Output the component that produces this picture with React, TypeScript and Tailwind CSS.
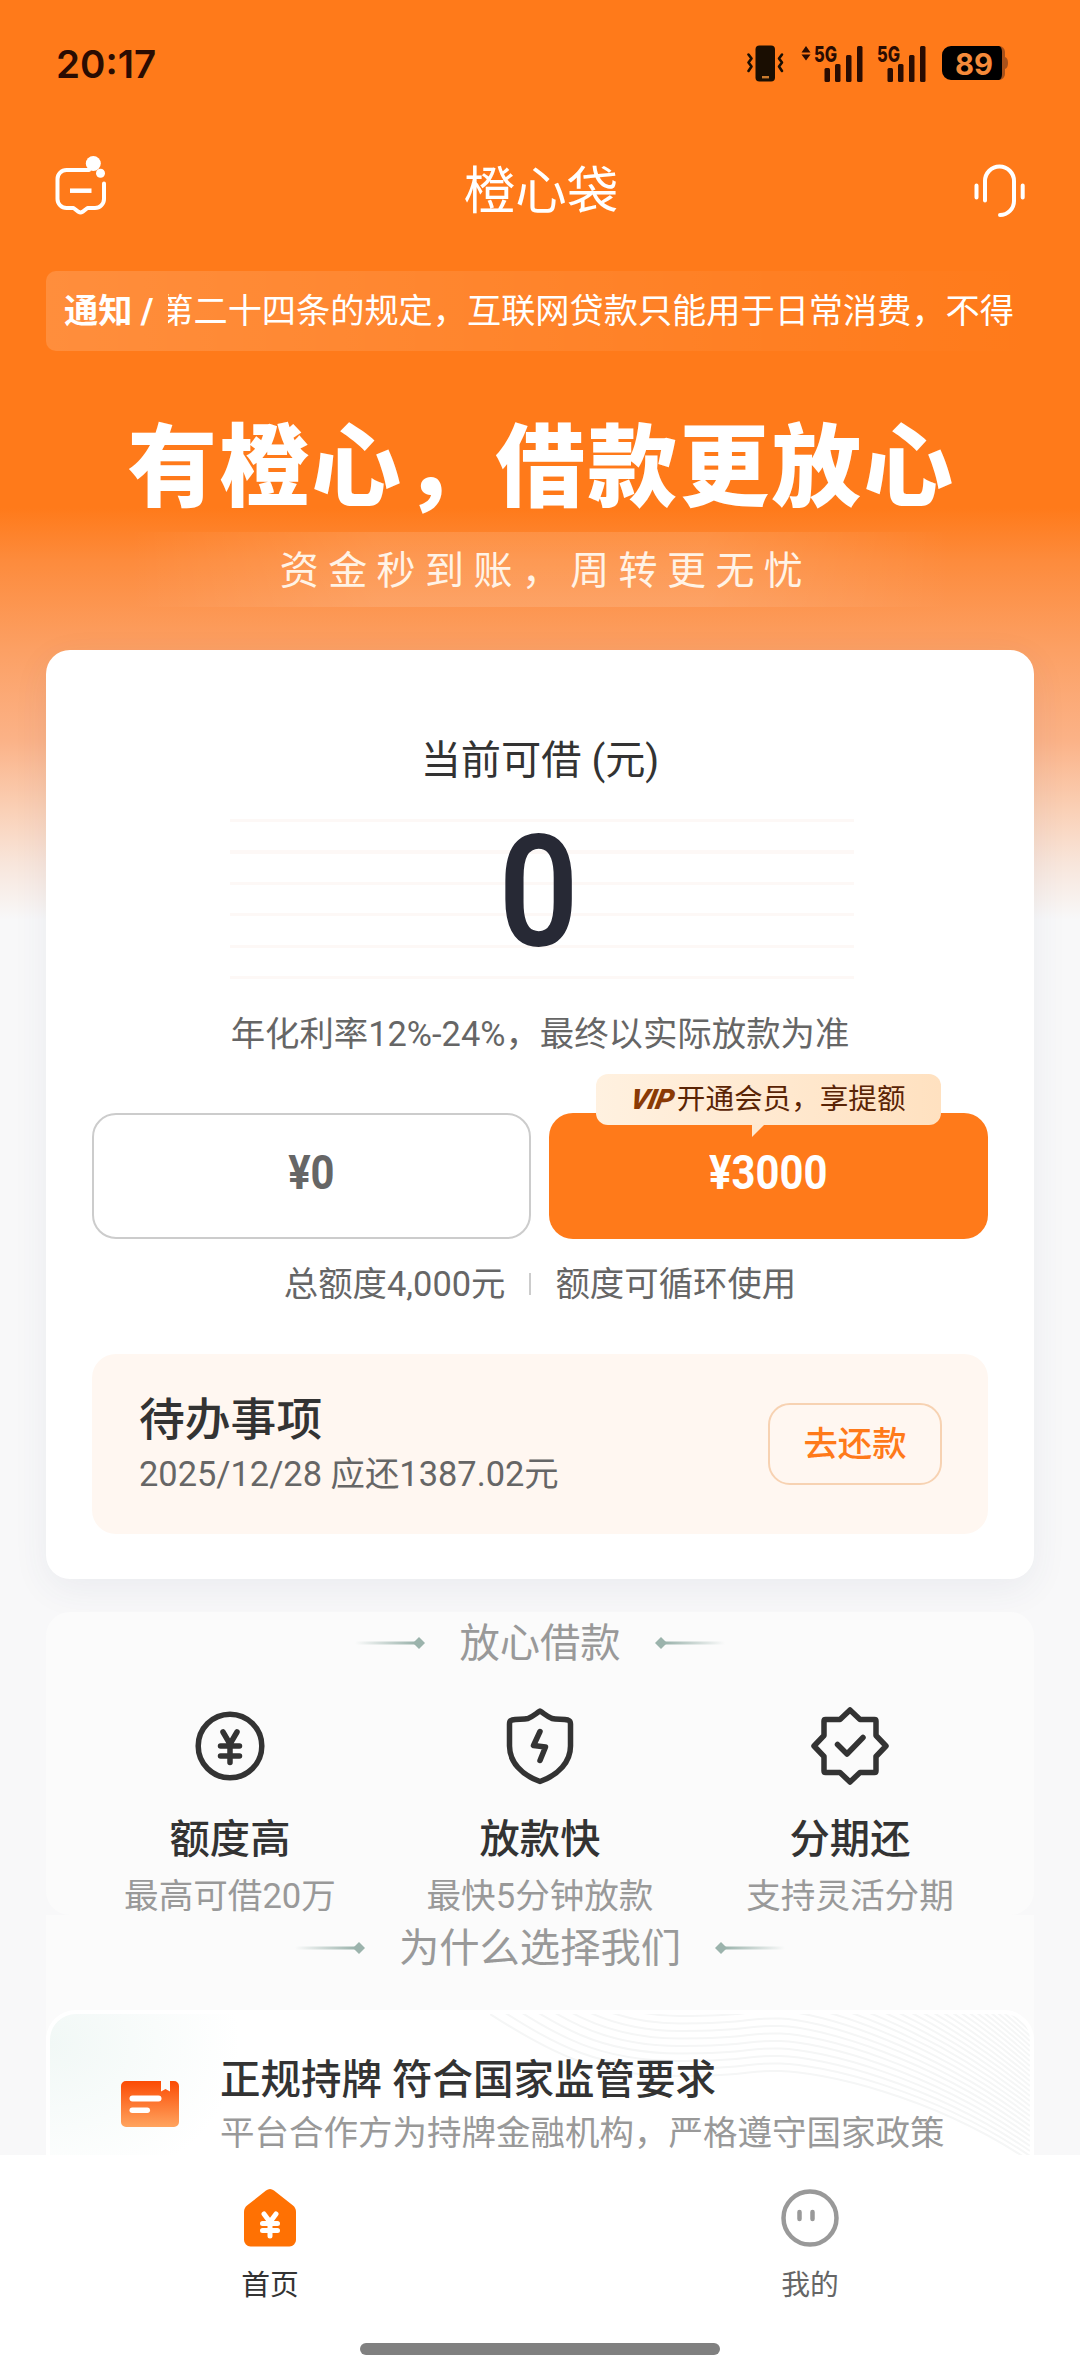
import React from 'react';

interface Feature {
  title: string;
  desc: string;
  icon: React.ReactNode;
}

const INK = '#333333';

const VibrateIcon = () => (
  <svg width="37" height="37" viewBox="0 0 37 37" fill="none">
    <rect x="8.5" y="0.5" width="19.5" height="36" rx="4" fill="#1a0e02" />
    <rect x="15" y="31" width="7" height="2.4" fill="#c87a2e" />
    <path d="M1.5 9.5l3 4-3 4 3 4-3 4.5" stroke="#1a0e02" strokeWidth="2.6" strokeLinecap="round" strokeLinejoin="round" />
    <path d="M35 9.5l-3 4 3 4-3 4 3 4.5" stroke="#1a0e02" strokeWidth="2.6" strokeLinecap="round" strokeLinejoin="round" />
  </svg>
);

const SignalIcon = ({ arrows = false }: { arrows?: boolean }) => (
  <svg width="62" height="50" viewBox="0 -6 62 50" fill="#2a0c02">
    {arrows && <path d="M0.5 7.5L5 1l4.5 6.5zM0.5 9.5L5 15.5l4.5-6z" />}
    <text x="13" y="16.5" fontFamily="Inter, sans-serif" fontWeight="800" fontSize="22" textLength="23" lengthAdjust="spacingAndGlyphs">5G</text>
    <rect x="23.5" y="23" width="5.5" height="14" rx="1.5" />
    <rect x="34" y="19" width="5.5" height="18" rx="1.5" />
    <rect x="45" y="10" width="5.5" height="27" rx="1.5" />
    <rect x="56" y="1" width="5.5" height="36" rx="1.5" />
  </svg>
);

const BatteryIcon = () => (
  <svg width="66" height="35" viewBox="0 0 66 35">
    <path d="M56 0h1a6 6 0 0 1 6 6v5q3 1 3 6t-3 6v5a6 6 0 0 1-6 6h-1z" fill="#a8511a" />
    <path d="M9 0h48q3 1 3 6v22q0 5-3 6H9a9 9 0 0 1-9-9V9a9 9 0 0 1 9-9z" fill="#000" />
    <text x="13" y="28.5" fontFamily="Inter, sans-serif" fontWeight="700" fontSize="30" textLength="38" lengthAdjust="spacingAndGlyphs" fill="#f58a3a">89</text>
  </svg>
);

const MessageIcon = () => (
  <svg width="56" height="62" viewBox="0 0 56 62" fill="none" stroke="#fff" strokeWidth="4" strokeLinecap="round" strokeLinejoin="round">
    <path d="M37 14H14.5a9 9 0 0 0-9 9v20a9 9 0 0 0 9 9h7l5 3.8q2 1.2 4 0l5-3.8H43a9 9 0 0 0 9-9V27.5" />
    <path d="M18 34.7h21.5" strokeWidth="4.5" strokeLinecap="butt" />
    <circle cx="41.3" cy="7.5" r="7.5" fill="#fff" stroke="none" />
    <circle cx="48.5" cy="17.3" r="4.5" fill="#fff" stroke="none" />
  </svg>
);

const HeadsetIcon = () => (
  <svg width="52" height="54" viewBox="0 0 52 54" fill="none" stroke="#fff" strokeWidth="4" strokeLinecap="round">
    <path d="M11 36.5V17a14.5 14.5 0 0 1 29 0V37a14 14 0 0 1-14 14" />
    <path d="M2.5 21.5v12M48.7 21.5v12" />
  </svg>
);

const YenCircleIcon = () => (
  <svg width="80" height="80" viewBox="0 0 80 80" fill="none" stroke={INK} strokeWidth="5.5" strokeLinecap="round" strokeLinejoin="round">
    <circle cx="40" cy="40" r="31.8" />
    <path d="M33 26l7 12 7-12M40 38v18.5M30.5 40h19M30.5 50h19" />
  </svg>
);

const ShieldBoltIcon = () => (
  <svg width="80" height="80" viewBox="0 0 80 80" fill="none" stroke={INK} strokeWidth="5.5" strokeLinecap="round" strokeLinejoin="round">
    <path d="M40 5C36 7.5 33 10.5 28 12.5C23 13.5 17 13 12 14q-2.5 .8-2.5 4V40c0 16 12 29 30.5 35.5C58.5 69 70.5 56 70.5 40V18q0-3.2-2.5-4C63 13 57 13.5 52 12.5C47 10.5 44 7.5 40 5z" />
    <path d="M40 25.5L33.5 39.5l12 1.5L40 54.5" />
  </svg>
);

const BadgeCheckIcon = () => (
  <svg width="80" height="80" viewBox="0 0 80 80" fill="none" stroke={INK} strokeWidth="5.5" strokeLinecap="round" strokeLinejoin="round">
    <path d="M40 4L50 13.5H64.5q1.5 0 1.5 1.5V29.5L76 40 66 50.5V65q0 1.5-1.5 1.5H50L40 76 30 66.5H15.5q-1.500 0-1.500-1.500V50.5L4 40 14 29.5V15q0-1.5 1.5-1.5H30z" />
    <path d="M27.5 38.5l9.5 9.5 16-16.5" />
  </svg>
);

const LicenseIcon = () => (
  <svg width="58" height="47" viewBox="0 0 58 47">
    <defs>
      <linearGradient id="license" x1="0" y1="0" x2="0" y2="1">
        <stop offset="0" stopColor="#fb4b04" />
        <stop offset="1" stopColor="#ffa45f" />
      </linearGradient>
    </defs>
    <path d="M5 0h35v10.5l4.5-2.5L49 10.5V0h4a5 5 0 0 1 5 5v36a5 5 0 0 1-5 5H5a5 5 0 0 1-5-5V5a5 5 0 0 1 5-5z" fill="url(#license)" />
    <rect x="8.5" y="14.5" width="32" height="6" rx="3" fill="#fff" />
    <rect x="8.5" y="26.5" width="20.5" height="5.5" rx="2.75" fill="#fff" />
  </svg>
);

const HomeIcon = () => (
  <svg width="54" height="60" viewBox="0 0 54 60" fill="none">
    <path d="M23 2.5q4-3 8 0L50 17.5q3 2.5 3 6.5v28a6.5 6.5 0 0 1-6.5 6.5h-39A6.5 6.5 0 0 1 1 52V24q0-4 3-6.5z" fill="#ff7103" />
    <path d="M21 26l6 8 6-8M27 34v14M19.5 35.5h15M19.5 42.5h15" stroke="#fff" strokeWidth="5" strokeLinecap="round" />
  </svg>
);

const FaceIcon = () => (
  <svg width="60" height="60" viewBox="0 0 60 60" fill="none" stroke="#999" strokeWidth="4.5" strokeLinecap="round">
    <circle cx="30" cy="30" r="26.5" />
    <path d="M19.5 24v7M32.5 24v7" />
  </svg>
);

const TitleMark = ({ flip = false }: { flip?: boolean }) => (
  <svg width="70" height="14" viewBox="0 0 70 14" className={flip ? '-scale-x-100' : ''}>
    <defs>
      <linearGradient id="mark" x1="0" y1="0" x2="1" y2="0">
        <stop offset="0" stopColor="#9bb3ac" stopOpacity="0" />
        <stop offset="1" stopColor="#9bb3ac" />
      </linearGradient>
    </defs>
    <rect x="0" y="5.5" width="60" height="3" fill="url(#mark)" />
    <path d="M64 1l6 6-6 6-6-6z" fill="#9bb3ac" />
  </svg>
);

const SectionTitle = ({ text }: { text: string }) => (
  <div className="flex h-[58px] items-center justify-center gap-[34px]">
    <TitleMark />
    <span className="pt-px text-[40.3px] leading-[58px] text-[#999]">{text}</span>
    <TitleMark flip />
  </div>
);

const features: Feature[] = [
  { title: '额度高', desc: '最高可借20万', icon: <YenCircleIcon /> },
  { title: '放款快', desc: '最快5分钟放款', icon: <ShieldBoltIcon /> },
  { title: '分期还', desc: '支持灵活分期', icon: <BadgeCheckIcon /> },
];

// Contour lines in the corner of the license card
const waves = Array.from({ length: 28 }, (_, k) => {
  const mid = 7.5 * k;
  return `M0 ${-11 * k}C70 ${45 - 10 * k} 110 ${62 - mid} 190 ${62 - mid}S250 ${56 - mid} 290 ${57 - mid}S440 ${80 - 6 * k} 540 ${147 - 5 * k}`;
});

const App: React.FC = () => {
  return (
    <div className="flex h-[2376px] w-[1080px] flex-col overflow-hidden bg-[#f8f8f9] bg-[linear-gradient(180deg,#ff7a1a_0px,#ff7a1a_508px,#fd8b3c_560px,#fca064_650px,#fbb287_740px,#fad0b6_810px,#f8e6dc_865px,#f8f8f9_920px)] font-[Roboto,'Noto_Sans_CJK_SC',sans-serif] text-[#333]">
      {/* Status bar */}
      <div className="flex h-[126px] shrink-0 items-center justify-between pl-[56px] pr-[72px] pt-px">
        <span className="font-[Inter,sans-serif] text-[38.5px] font-semibold leading-[40px] text-[#2a0c02]">20:17</span>
        <div className="flex items-center">
          <VibrateIcon />
          <div className="ml-[17px]"><SignalIcon arrows /></div>
          <div className="ml-px"><SignalIcon /></div>
          <div className="ml-[16px]"><BatteryIcon /></div>
        </div>
      </div>

      {/* Nav bar */}
      <div className="flex h-[126px] shrink-0 items-center justify-between pl-[52px] pr-[54px]">
        <div className="-mt-1"><MessageIcon /></div>
        <h1 className="pt-[5px] text-[51.5px] leading-[72px] text-white">橙心袋</h1>
        <div className="mt-[3px]"><HeadsetIcon /></div>
      </div>

      {/* Notice */}
      <div className="mx-[46px] mt-[19px] flex h-[80px] shrink-0 items-center rounded-[10px] bg-linear-to-r from-white/15 to-white/0 pl-[18px] pr-[20px] pt-[2px] text-[34.2px] text-white">
        <span className="w-[104px] shrink-0 whitespace-pre font-bold">通知 /</span>
        <div className="flex w-[846px] justify-end overflow-hidden whitespace-nowrap">
          <span className="shrink-0">第二十四条的规定，互联网贷款只能用于日常消费，不得</span>
        </div>
      </div>

      {/* Slogan */}
      <h2 className="mt-[55px] h-[124px] shrink-0 whitespace-nowrap pl-[3px] text-center text-[89.5px] font-black leading-[126px] tracking-[2.5px] text-white">有橙心，借款更放心</h2>
      <div className="mx-[130px] mt-[2px] flex h-[75px] shrink-0 items-center justify-center bg-[linear-gradient(90deg,transparent,rgba(255,255,255,0.12)_30%,rgba(255,255,255,0.12)_70%,transparent)]">
        <span className="pl-[12px] pt-[2px] text-[39px] leading-[60px] tracking-[9.4px] text-[#fff3e6]">资金秒到账，周转更无忧</span>
      </div>

      {/* Credit card */}
      <div className="mx-[46px] mt-[43px] flex h-[929px] shrink-0 flex-col rounded-[24px] bg-white px-[46px] shadow-[0_10px_36px_rgba(60,70,110,0.07)]">
        <div className="mt-[81px] h-[60px] text-center text-[40.2px] leading-[60px]">当前可借 (元)</div>
        <div className="ml-[138px] mt-[28px] flex h-[160px] w-[624px] items-center justify-center bg-[repeating-linear-gradient(180deg,#fdf8f6_0px,#fdf8f6_3px,#fff_3px,#fff_31.5px)]">
          <span className="-mt-[15px] mr-[7px] scale-x-[0.9] text-[156px] font-semibold leading-[160px] text-[#272935]">0</span>
        </div>
        <div className="mt-[28px] h-[54px] text-center text-[34.4px] leading-[54px] text-[#666]">年化利率12%-24%，最终以实际放款为准</div>

        <div className="mt-[52px] grid h-[126px] grid-cols-2 gap-[18px]">
          <button className="flex items-center justify-center rounded-[24px] border-2 border-[#ccc] pb-[5px] text-[47.5px] font-bold text-[#666]">
            <span className="scale-x-[0.88]">¥0</span>
          </button>
          <button className="relative flex items-center justify-center rounded-[24px] bg-[#ff7a1a] pb-[5px] text-[47.5px] font-bold text-white">
            <span className="scale-x-[0.88]">¥3000</span>
            <div className="absolute -top-[39px] left-[47px] flex h-[51px] w-[345px] items-center justify-center rounded-[12px] bg-linear-to-r from-[#fff1e0] to-[#ffe1c0] text-[28.6px] font-normal text-[#5a2405]">
              <span className="mr-[3px] -skew-x-12 text-[28px] font-black italic tracking-[-0.5px] text-[#8a3a05]">VIP</span>
              开通会员，享提额
              <svg className="absolute left-[156px] top-[50px]" width="13" height="13" viewBox="0 0 13 13">
                <path d="M0 0h13L0 13z" fill="#ffe9d0" />
              </svg>
            </div>
          </button>
        </div>

        <div className="mt-[18px] flex h-[54px] items-center justify-center text-[34.4px] leading-[54px] text-[#666]">
          <span>总额度4,000元</span>
          <span className="mx-[24px] h-[22px] w-[2px] bg-[#ccc]" />
          <span>额度可循环使用</span>
        </div>

        {/* Pending repayment */}
        <div className="mt-[43px] flex h-[180px] items-center justify-between rounded-[24px] bg-[#fff7f1] pl-[47px] pr-[46px]">
          <div>
            <p className="h-[60px] pt-[2px] text-[45.8px] font-medium leading-[60px]">待办事项</p>
            <p className="h-[50px] text-[34.4px] leading-[50px] text-[#666]">2025/12/28 应还1387.02元</p>
          </div>
          <button className="h-[82px] w-[174px] rounded-[22px] border-2 border-[#f7d2b2] pt-px text-[34.4px] font-medium text-[#ff7a1a]">去还款</button>
        </div>
      </div>

      {/* Features */}
      <div className="mx-[46px] mt-[33px] flex h-[303px] shrink-0 flex-col rounded-[24px] bg-[#fbfbfb]">
        <div className="mt-[2px]"><SectionTitle text="放心借款" /></div>
        <div className="mx-[29px] mt-[34px] grid grid-cols-3">
          {features.map((f) => (
            <div key={f.title} className="flex flex-col items-center">
              {f.icon}
              <p className="mt-[24px] h-[58px] text-[40.3px] font-medium leading-[60px]">{f.title}</p>
              <p className="h-[54px] pt-px text-[34.6px] leading-[54px] text-[#999]">{f.desc}</p>
            </div>
          ))}
        </div>
      </div>

      {/* Why us */}
      <div className="mx-[46px] flex h-[240px] shrink-0 flex-col overflow-hidden bg-[#fbfbfb]">
        <div className="mt-[4px]"><SectionTitle text="为什么选择我们" /></div>
        <div className="relative mt-[33px] flex h-[220px] shrink-0 overflow-hidden rounded-[30px] border-4 border-white bg-white bg-[radial-gradient(ellipse_190px_150px_at_0_30px,#f1f8f6,#ffffff)] pl-[71px]">
          <svg className="absolute right-0 top-0" width="540" height="160" viewBox="0 0 540 160" fill="none" stroke="#f5f6f6" strokeWidth="2">
            {waves.map((d) => <path key={d} d={d} />)}
          </svg>
          <div className="mt-[67px]"><LicenseIcon /></div>
          <div className="relative ml-[41px] mt-[36px]">
            <p className="h-[58px] text-[40.5px] font-medium leading-[60px]">正规持牌 符合国家监管要求</p>
            <p className="h-[50px] whitespace-nowrap text-[34.5px] leading-[50px] text-[#999]">平台合作方为持牌金融机构，严格遵守国家政策</p>
          </div>
        </div>
      </div>

      {/* Tab bar */}
      <div className="flex h-[221px] shrink-0 flex-col bg-white">
        <div className="grid grid-cols-2 pt-[33px]">
          <div className="flex flex-col items-center">
            <HomeIcon />
            <span className="mt-[15px] h-[45px] text-[28.8px] leading-[44px]">首页</span>
          </div>
          <div className="flex flex-col items-center">
            <FaceIcon />
            <span className="mt-[15px] h-[45px] text-[28.8px] leading-[44px] text-[#666]">我的</span>
          </div>
        </div>
        <div className="mx-auto mt-[35px] h-[12px] w-[360px] rounded-full bg-[#808080]" />
      </div>
    </div>
  );
};

export default App;
